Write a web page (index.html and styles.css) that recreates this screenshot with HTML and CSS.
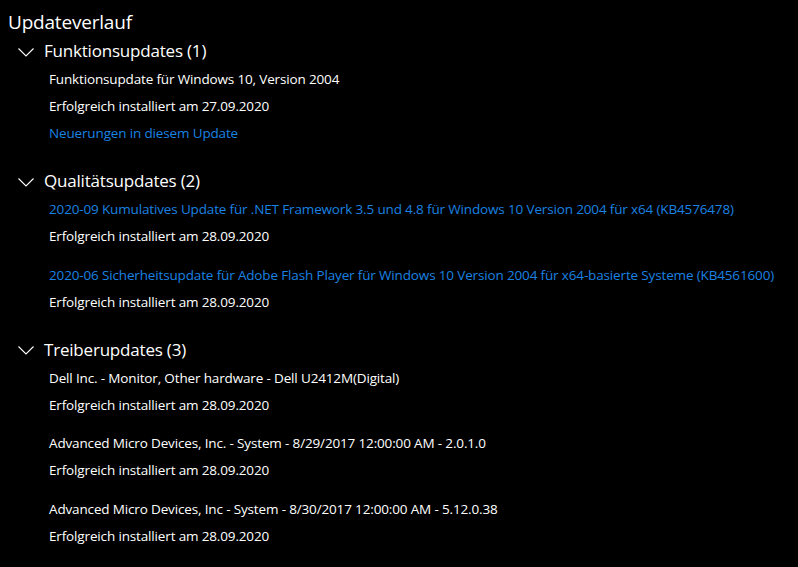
FILE: index.html
```html
<!DOCTYPE html>
<html lang="de">
<head>
<meta charset="utf-8">
<title>Updateverlauf</title>
<link rel="stylesheet" href="styles.css">
</head>
<body>
<main class="page">
  <h1 class="title">Updateverlauf</h1>

  <section class="group">
    <div class="group-head">
      <svg class="chev" width="16" height="9" viewBox="0 0 16 9"><path d="M0.5 0.5 L8 8 L15.5 0.5" fill="none" stroke="#fff" stroke-width="1.1"/></svg>
      <span class="group-title">Funktionsupdates (1)</span>
    </div>
    <div class="items">
      <div class="item">
        <div class="line">Funktionsupdate für Windows 10, Version 2004</div>
        <div class="line">Erfolgreich installiert am 27.09.2020</div>
        <div class="line link">Neuerungen in diesem Update</div>
      </div>
    </div>
  </section>

  <section class="group">
    <div class="group-head">
      <svg class="chev" width="16" height="9" viewBox="0 0 16 9"><path d="M0.5 0.5 L8 8 L15.5 0.5" fill="none" stroke="#fff" stroke-width="1.1"/></svg>
      <span class="group-title">Qualitätsupdates (2)</span>
    </div>
    <div class="items">
      <div class="item">
        <div class="line link">2020-09 Kumulatives Update für .NET Framework 3.5 und 4.8 für Windows 10 Version 2004 für x64 (KB4576478)</div>
        <div class="line">Erfolgreich installiert am 28.09.2020</div>
      </div>
      <div class="item">
        <div class="line link">2020-06 Sicherheitsupdate für Adobe Flash Player für Windows 10 Version 2004 für x64-basierte Systeme (KB4561600)</div>
        <div class="line">Erfolgreich installiert am 28.09.2020</div>
      </div>
    </div>
  </section>

  <section class="group">
    <div class="group-head">
      <svg class="chev" width="16" height="9" viewBox="0 0 16 9"><path d="M0.5 0.5 L8 8 L15.5 0.5" fill="none" stroke="#fff" stroke-width="1.1"/></svg>
      <span class="group-title">Treiberupdates (3)</span>
    </div>
    <div class="items">
      <div class="item">
        <div class="line">Dell Inc. - Monitor, Other hardware - Dell U2412M(Digital)</div>
        <div class="line">Erfolgreich installiert am 28.09.2020</div>
      </div>
      <div class="item">
        <div class="line">Advanced Micro Devices, Inc. - System - 8/29/2017 12:00:00 AM - 2.0.1.0</div>
        <div class="line">Erfolgreich installiert am 28.09.2020</div>
      </div>
      <div class="item">
        <div class="line">Advanced Micro Devices, Inc - System - 8/30/2017 12:00:00 AM - 5.12.0.38</div>
        <div class="line">Erfolgreich installiert am 28.09.2020</div>
      </div>
    </div>
  </section>
</main>
</body>
</html>
```

FILE: styles.css
```css
html, body {
  margin: 0;
  padding: 0;
  background: #000;
  color: #fff;
  font-family: "Open Sans", "Noto Sans", sans-serif;
}
.page {
  display: flex;
  flex-direction: column;
  gap: 21px;
  padding: 8px 8px 0 8px;
}
.title {
  margin: 0 0 -19px 0;
  font-size: 19px;
  font-weight: 400;
  line-height: 28px;
  letter-spacing: -0.2px;
}
.group {
  display: flex;
  flex-direction: column;
}
.group-head {
  display: flex;
  align-items: center;
  gap: 10px;
  height: 26px;
  padding-left: 10px;
}
.chev {
  display: block;
  margin-top: 2px;
}
.group-title {
  font-size: 17px;
  line-height: 26px;
  letter-spacing: -0.2px;
}
.items {
  display: flex;
  flex-direction: column;
  gap: 11.5px;
  padding-left: 41px;
  margin-top: 2px;
}
.line {
  font-size: 13.5px;
  line-height: 27px;
  letter-spacing: -0.15px;
  white-space: nowrap;
}
.link {
  color: #1a82e2;
}
```
